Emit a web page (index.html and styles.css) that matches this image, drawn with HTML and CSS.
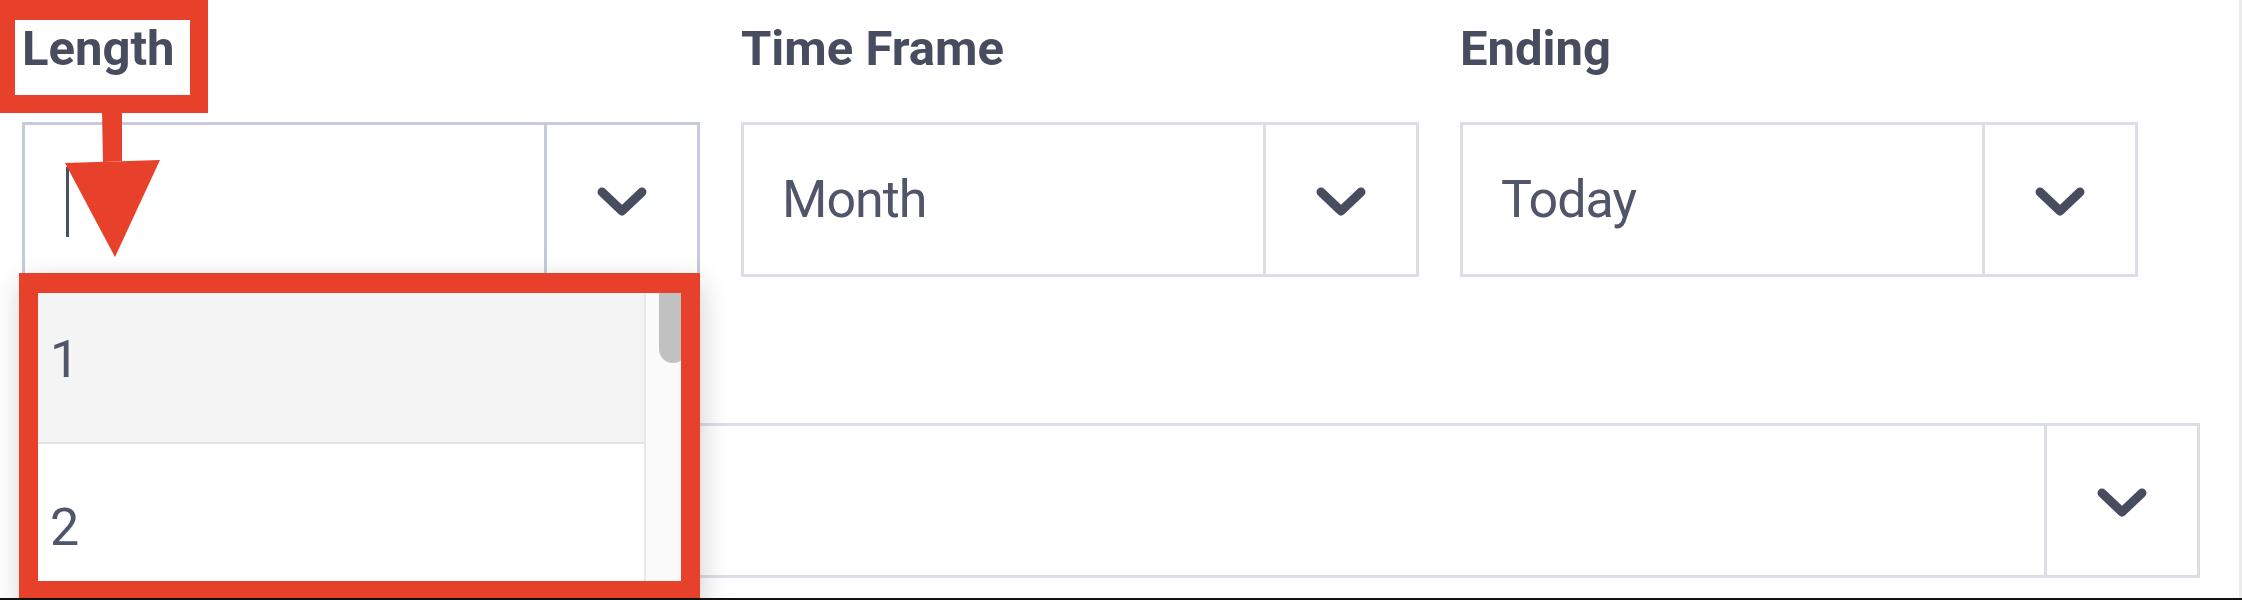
FILE: index.html
```html
<!DOCTYPE html>
<html lang="en">
<head>
<meta charset="utf-8">
<title>Report filters</title>
<link rel="stylesheet" href="styles.css">
</head>
<body>
<div class="page">
  <div class="main">
    <div class="form">
      <div class="row-top">
        <div class="field">
          <div class="label">Length</div>
          <div class="select focused">
            <div class="value"><span class="caret"></span></div>
            <div class="toggle">
              <svg class="chev" viewBox="0 0 50 30" width="50" height="30"><polyline points="5,5 25,24 45,5"/></svg>
            </div>
          </div>
          <div class="menu">
            <div class="options">
              <div class="option active">1</div>
              <div class="option">2</div>
            </div>
            <div class="track"><div class="thumb"></div></div>
          </div>
        </div>
        <div class="field">
          <div class="label">Time Frame</div>
          <div class="select">
            <div class="value">Month</div>
            <div class="toggle">
              <svg class="chev" viewBox="0 0 50 30" width="50" height="30"><polyline points="5,5 25,24 45,5"/></svg>
            </div>
          </div>
        </div>
        <div class="field">
          <div class="label">Ending</div>
          <div class="select">
            <div class="value">Today</div>
            <div class="toggle">
              <svg class="chev" viewBox="0 0 50 30" width="50" height="30"><polyline points="5,5 25,24 45,5"/></svg>
            </div>
          </div>
        </div>
      </div>
      <div class="field wide">
        <div class="label"></div>
        <div class="select">
          <div class="value"></div>
          <div class="toggle">
            <svg class="chev" viewBox="0 0 50 30" width="50" height="30"><polyline points="5,5 25,24 45,5"/></svg>
          </div>
        </div>
      </div>
    </div>
    <div class="callout callout-label"></div>
    <svg class="arrow" viewBox="0 0 200 270" width="200" height="270">
      <polygon points="102,112 122,112 122,161 103,162"/>
      <polygon points="65,163 160,160 115,257"/>
    </svg>
    <div class="callout callout-menu"></div>
  </div>
  <div class="bottom-bar"></div>
</div>
</body>
</html>
```

FILE: styles.css
```css
* { box-sizing: border-box; }

html, body {
  margin: 0;
  padding: 0;
  background: #ffffff;
}

body {
  font-family: Roboto, "Liberation Sans", sans-serif;
  color: #4b5064;
}

.page {
  width: 2242px;
  height: 600px;
  display: flex;
  flex-direction: column;
}

.main {
  position: relative;
  height: 598px;
  overflow: hidden;
  border-right: 3px solid #ebebeb;
}

.bottom-bar {
  height: 2px;
  background: #111111;
}

.form {
  padding-left: 22px;
  display: flex;
  flex-direction: column;
  row-gap: 24px;
}

.row-top {
  display: grid;
  grid-template-columns: repeat(3, 678px);
  column-gap: 41px;
}

.field {
  position: relative;
}

.field.wide {
  width: 2178px;
}

.label {
  height: 122px;
  padding-top: 19px;
  font-size: 49px;
  line-height: 60px;
  font-weight: 700;
  color: #474c5f;
}

.select {
  display: flex;
  height: 155px;
  border: 3px solid #dcdee6;
  background: #ffffff;
}

.select.focused {
  border-color: #c7cad8;
}

.select.focused .toggle {
  border-left-color: #c7cad8;
}

.value {
  flex: 1;
  display: flex;
  align-items: center;
  padding-left: 38px;
  font-size: 52px;
  font-weight: 400;
  letter-spacing: -1px;
  color: #50556a;
}

.caret {
  display: block;
  width: 3px;
  height: 70px;
  background: #4b5064;
  margin-left: 3px;
  margin-top: 4px;
}

.toggle {
  width: 153px;
  border-left: 3px solid #dcdee6;
  display: flex;
  align-items: center;
  justify-content: center;
}

.chev {
  display: block;
  margin-top: 4px;
}

.chev polyline {
  fill: none;
  stroke: #474c5f;
  stroke-width: 9;
  stroke-linecap: round;
  stroke-linejoin: round;
}

.menu {
  position: absolute;
  top: 100%;
  left: 0;
  width: 678px;
  z-index: 2;
  display: flex;
  background: #ffffff;
  box-shadow: 0 6px 28px rgba(0, 0, 0, 0.2);
}

.options {
  flex: 1;
}

.option {
  height: 167px;
  display: flex;
  align-items: center;
  padding-left: 28px;
  font-size: 52px;
  color: #50556a;
  background: #ffffff;
}

.option.active {
  background: #f4f4f4;
  border-bottom: 2px solid #e1e3e9;
}

.track {
  width: 56px;
  background: #fafafa;
  border-left: 2px solid #e8e8e8;
  display: flex;
  justify-content: center;
  padding-top: 4px;
}

.thumb {
  width: 28px;
  height: 82px;
  border-radius: 14px;
  background: #c1c1c1;
}

.callout {
  position: absolute;
  border-style: solid;
  border-color: #e8412b;
  z-index: 5;
}

.callout-label {
  left: -3px;
  top: 0;
  width: 211px;
  height: 113px;
  border-width: 20px 18px 18px 18px;
}

.callout-menu {
  left: 19px;
  top: 273px;
  width: 681px;
  height: 327px;
  border-width: 20px 19px 19px 19px;
}

.arrow {
  position: absolute;
  left: 0;
  top: 0;
  z-index: 6;
}

.arrow polygon {
  fill: #e8412b;
}
```
